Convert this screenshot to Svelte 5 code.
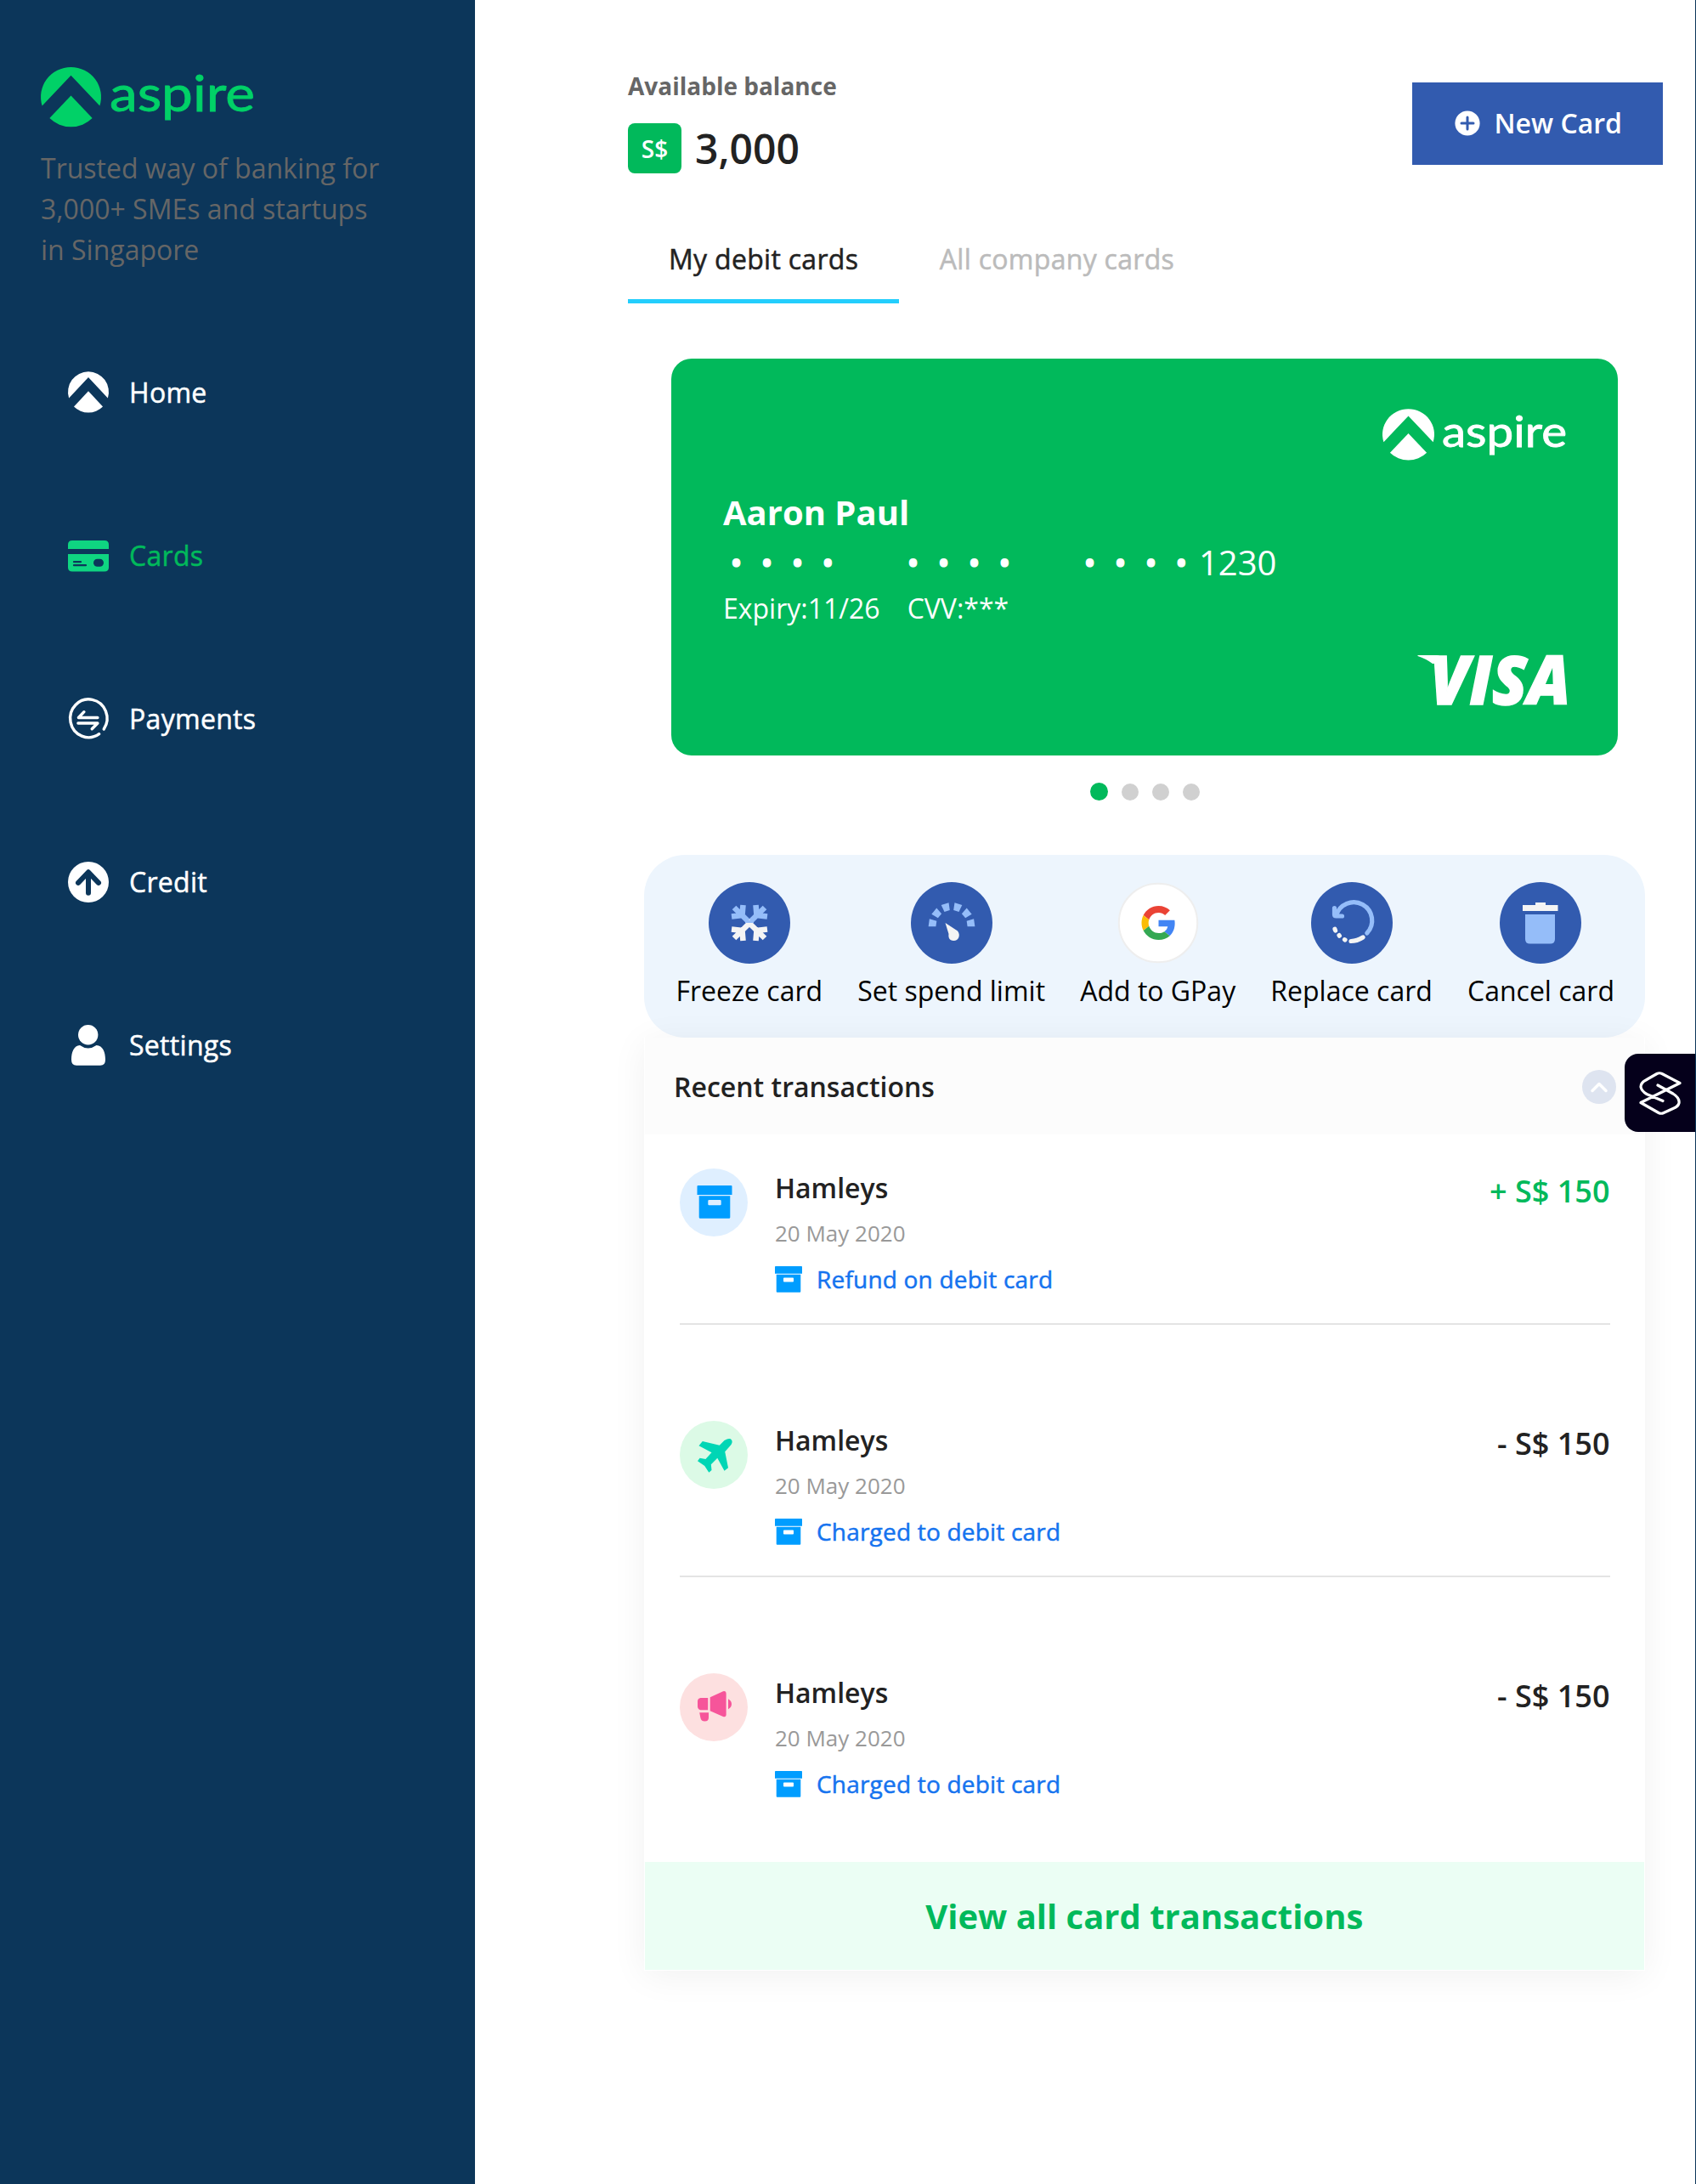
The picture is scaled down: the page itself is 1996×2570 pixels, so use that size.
<script>
  const nav = [
    { label: 'Home', icon: 'home' },
    { label: 'Cards', icon: 'cards', active: true },
    { label: 'Payments', icon: 'payments' },
    { label: 'Credit', icon: 'credit' },
    { label: 'Settings', icon: 'settings' }
  ];
  const actions = [
    { label: 'Freeze card', icon: 'freeze' },
    { label: 'Set spend limit', icon: 'limit' },
    { label: 'Add to GPay', icon: 'gpay' },
    { label: 'Replace card', icon: 'replace' },
    { label: 'Cancel card', icon: 'cancel' }
  ];
  const transactions = [
    { icon: 'box', amount: '+ S$ 150', note: 'Refund on debit card', credit: true },
    { icon: 'plane', amount: '- S$ 150', note: 'Charged to debit card' },
    { icon: 'horn', amount: '- S$ 150', note: 'Charged to debit card' }
  ];
  const ticks = [8, 40, 73, 107, 140, 172];
  const pages = [0, 1, 2, 3];
</script>

{#snippet mark()}
  <path d="M24 6 46.9 30.5A24 24 0 1 0 1.1 30.5Z" />
  <path d="M24 22.3 41 40.5A24 24 0 0 1 7 40.5Z" />
{/snippet}

{#snippet box()}
  <path d="M1 0H40Q41 0 41 1V11H0V1Q0 0 1 0Z" />
  <path fill-rule="evenodd" d="M2.2 12.3H38.8V37.5Q38.8 38.8 37.5 38.8H3.5Q2.2 38.8 2.2 37.5ZM14 17Q12.8 17 12.8 18.2V22Q12.8 23.2 14 23.2H27Q28.2 23.2 28.2 22V18.2Q28.2 17 27 17Z" />
{/snippet}

<div class="page">
  <aside>
    <svg class="brand" viewBox="0 0 256 72" fill="currentColor" role="img" aria-label="aspire">
      <svg width="71" height="70" viewBox="0 0 48 48" preserveAspectRatio="none">{@render mark()}</svg>
      <text class="word" x="81" y="50.5" font-size="58" textLength="171" lengthAdjust="spacingAndGlyphs">aspire</text>
    </svg>
    <p class="tagline">Trusted way of banking for 3,000+ SMEs and startups in Singapore</p>
    <nav>
      {#each nav as item}
        <a class:active={item.active}>
          <svg class="nav-icon" viewBox="0 0 48 48" fill="currentColor">
            {#if item.icon === 'home'}
              {@render mark()}
            {:else if item.icon === 'cards'}
              <path d="M0 16V11Q0 6 5 6H43Q48 6 48 11V16Z" />
              <path d="M0 22H48V37.5Q48 42.5 43 42.5H5Q0 42.5 0 37.5Z" />
              <path class="cut" d="M7 31.2H15M7 35.2H21" stroke-width="2.2" stroke-linecap="round" />
              <rect class="hole" x="30" y="27.7" width="12" height="9" rx="4.5" />
            {:else if item.icon === 'payments'}
              <g transform="translate(-.6 0)" fill="none" stroke="currentColor" stroke-width="3.4" stroke-linecap="round" stroke-linejoin="round">
                <path d="M42.8 36A21.7 22.4 0 1 0 37.3 41.7" />
                <path d="M35.5 22.5H13L19.5 15.7M12.5 29H35.5L28.8 35.7" />
              </g>
            {:else if item.icon === 'credit'}
              <circle cx="24" cy="24" r="24" />
              <path class="cut" d="M24 36.8V12.5M12 24.8 24 12.3 36 24.8" stroke-width="6" stroke-linecap="round" stroke-linejoin="round" />
            {:else}
              <circle cx="23.7" cy="11.8" r="11.7" />
              <path d="M14 24Q23.7 31 33.5 24C41 24.5 44 32 44 41Q44 47.8 38 47.8H10Q4 47.8 4 41C4 32 7 24.5 14 24Z" />
            {/if}
          </svg>
          <span>{item.label}</span>
        </a>
      {/each}
    </nav>
  </aside>

  <main>
    <header>
      <div>
        <h6>Available balance</h6>
        <div class="balance">
          <span class="currency">S$</span>
          <span class="total">3,000</span>
        </div>
      </div>
      <button class="new-card">
        <svg viewBox="0 0 30 30" width="30" height="30">
          <circle cx="15" cy="15" r="14.6" fill="#fff" />
          <path d="M15 8V22M8 15H22" stroke="#325baf" stroke-width="3" stroke-linecap="round" />
        </svg>
        <span>New Card</span>
      </button>
    </header>

    <div class="tabs">
      <span class="tab current">My debit cards</span>
      <span class="tab">All company cards</span>
    </div>

    <section class="card">
      <svg class="card-brand" viewBox="0 0 220 62" fill="#fff" role="img" aria-label="aspire">
        <svg width="61" height="60" viewBox="0 0 48 48" preserveAspectRatio="none">{@render mark()}</svg>
        <text class="word" x="70" y="43.8" font-size="50" textLength="147" lengthAdjust="spacingAndGlyphs">aspire</text>
      </svg>
      <div class="holder">Aaron Paul</div>
      <div class="number">
        <span class="masked">••••</span>
        <span class="masked">••••</span>
        <span class="masked last">••••</span>
        <span>1230</span>
      </div>
      <div class="meta"><span>Expiry:11/26</span><span>CVV:***</span></div>
      <svg class="visa" viewBox="0 0 178 64" fill="#fff" role="img" aria-label="VISA">
        <path d="M1.500 3H24Q30 3 31 12L19 13Q11 7 1.500 4Z" />
        <text x="15.500" y="60.5" font-size="80" textLength="166" lengthAdjust="spacingAndGlyphs">VISA</text>
      </svg>
    </section>

    <div class="pager">
      {#each pages as p}<i class:on={p === 0}></i>{/each}
    </div>

    <section class="actions">
      {#each actions as a}
        <div class="action">
          <svg viewBox="-48 -48 96 96" width="96" height="96">
            {#if a.icon === 'gpay'}
              <circle r="46.2" fill="#fff" stroke="#eee" stroke-width="2" />
              <svg x="-19.5" y="-20" width="40" height="40" viewBox="0 0 48 48">
                <path fill="#EA4335" d="M24 9.5c3.54 0 6.71 1.22 9.21 3.6l6.85-6.85C35.9 2.38 30.47 0 24 0 14.62 0 6.51 5.38 2.56 13.22l7.98 6.19C12.43 13.72 17.74 9.5 24 9.5z" />
                <path fill="#4285F4" d="M46.98 24.55c0-1.57-.15-3.09-.38-4.55H24v9.02h12.94c-.58 2.96-2.26 5.48-4.78 7.18l7.73 6c4.51-4.18 7.09-10.36 7.09-17.65z" />
                <path fill="#FBBC05" d="M10.53 28.59c-.48-1.45-.76-2.99-.76-4.59s.27-3.14.76-4.59l-7.98-6.19C.92 16.46 0 20.12 0 24c0 3.88.92 7.54 2.56 10.78l7.97-6.19z" />
                <path fill="#34A853" d="M24 48c6.48 0 11.93-2.13 15.89-5.81l-7.73-6c-2.15 1.45-4.92 2.3-8.16 2.3-6.26 0-11.57-4.22-13.47-9.91l-7.98 6.19C6.51 42.62 14.62 48 24 48z" />
              </svg>
            {:else}
              <circle r="48" fill="#325baf" />
            {/if}
            {#if a.icon === 'freeze'}
              <g fill="none" stroke-width="6.6">
                <path stroke="#95bdf9" d="M-18-18 0-.5 18-18M-7.5-21-8.5-9-21-7.5M7.5-21 8.5-9 21-7.5" />
                <path stroke="#f4f4f4" d="M-18 18 0 .5 18 18M-7.5 21-8.5 9-21 7.5M7.5 21 8.5 9 21 7.5" />
                <path stroke="#95bdf9" stroke-width="3" d="M-5-1.5H5" />
              </g>
            {:else if a.icon === 'limit'}
              <g fill="#95bdf9">
                {#each ticks as t}
                  <path transform="translate(0 3.5) rotate({-180 + t})" d="M27-4.6V4.6L18.3 3.3V-3.3Z" />
                {/each}
              </g>
              <path fill="#f4f4f4" d="M-7.5 0 7 9.5C11 14.5 8 21 2.5 21S-4 17-3.5 13Z" />
            {:else if a.icon === 'replace'}
              <g fill="none" stroke-width="5.2" stroke-linecap="round" stroke-linejoin="round">
                <path stroke="#95bdf9" d="M-18.5-8.5A21.5 21.5 0 1 1 17.8 12M-20.5-17.5V-10Q-20.5-8-18.5-8H-11.5" />
                <path stroke="#f4f4f4" d="M13 17Q6 21.5-1 21.5M-8.5 19.7-8 20M-15 14.6-14.6 15.2M-20 7.3-19.4 9" />
              </g>
            {:else if a.icon === 'cancel'}
              <path fill="#f4f4f4" d="M-21-21H-6V-24H6V-21H20.5V-14H-21Z" />
              <path fill="#95bdf9" d="M-18-10H17V19Q17 24.6 11.5 24.6H-12.5Q-18 24.6-18 19Z" />
            {/if}
          </svg>
          <span>{a.label}</span>
        </div>
      {/each}
    </section>

    <section class="transactions">
      <div class="head">
        <span>Recent transactions</span>
        <svg viewBox="0 0 40 40" width="40" height="40">
          <circle cx="20" cy="20" r="20" fill="#dee4f0" />
          <path d="M12 24.5 20 16.5 28 24.5" fill="none" stroke="#fff" stroke-width="3.5" stroke-linecap="round" stroke-linejoin="round" />
        </svg>
      </div>
      <div class="list">
        {#each transactions as t}
          <article>
            <svg class="avatar" viewBox="0 0 80 80" width="80" height="80">
              {#if t.icon === 'box'}
                <circle cx="40" cy="40" r="40" fill="#dfefff" />
                <svg x="20.5" y="20" width="41" height="39" viewBox="0 0 41 39" fill="#009dff">{@render box()}</svg>
              {:else if t.icon === 'plane'}
                <circle cx="40" cy="40" r="40" fill="#dcfae6" />
                <path fill="#00d6b5" d="M52.5 23Q59 19.5 61 22.5T59 29.7L53.2 36.3 57 55.3 52.5 58.7 44.3 43.7 36.8 51.3 37.5 58 34.3 60.7 29.3 53 21 47.3 23.6 43.7 30.4 45 37.5 37.3 22.5 29.3 26.8 24 46.8 28.7Z" />
              {:else}
                <circle cx="40" cy="40" r="40" fill="#fde0e0" />
                <g fill="#f6559a">
                  <path d="M33.2 29V43.3H24.5Q21 42.5 21 39V33Q21 29.5 24.5 29Z" />
                  <path d="M35.7 28.3 51 21.2Q54.6 20.5 54.6 24V48.5Q54.6 52 51 51L35.7 44.3Z" />
                  <path d="M57 30.3Q61 32.5 61 36.3T57 42.3ZM23.2 46.3H34V52Q34 56.5 29.5 56.5T24.3 52Z" />
                </g>
              {/if}
            </svg>
            <div class="info">
              <span class="name">Hamleys</span>
              <span class="date">20 May 2020</span>
              <span class="note">
                <svg viewBox="0 0 41 39" width="32" height="31" fill="#009dff" preserveAspectRatio="none">{@render box()}</svg>
                {t.note}
              </span>
            </div>
            <span class="amount" class:credit={t.credit}>{t.amount}</span>
          </article>
        {/each}
      </div>
      <div class="all">View all card transactions</div>
    </section>
  </main>

  <div class="widget">
    <svg viewBox="0 0 83 92" width="83" height="92" fill="none" stroke="#fff" stroke-width="3.2" stroke-linejoin="round" stroke-linecap="round">
      <path d="M39 37 57 47Q65 52 64 58Q63 62 58 64L46 69.5Q43 71 40 69.5L19 57.5 65 34.5 44 23.5Q41 22 38 23.5L25 31Q19 34 19 39Q20 44 26 47.5L45 55.5" />
    </svg>
  </div>
</div>

<style>
  :global(body) { background: #fff; }
  .page, .page :global(*) { box-sizing: border-box; }
  .page {
    position: relative;
    display: flex;
    width: 1996px;
    height: 2570px;
    overflow: hidden;
    border-right: 1px solid #0c365a;
    font-family: "Open Sans", "Noto Sans", sans-serif;
    font-size: 32px;
    line-height: 48px;
    color: #222;
  }
  svg { display: block; flex: none; overflow: visible; }

  aside {
    flex: none;
    width: 558.5px;
    padding: 80.4px 48px 0;
    background: #0c365a;
  }
  .brand { width: 256px; height: 72px; color: #01d167; }
  .word { font-family: Lato, sans-serif; font-weight: 400; stroke: currentColor; stroke-width: 0.8; }
  .card-brand { color: #fff; }
  .tagline { width: 410px; margin: 21.6px 0 0; color: #666; }
  nav { display: flex; flex-direction: column; margin-top: 48px; }
  nav a {
    display: flex;
    align-items: center;
    gap: 24px;
    height: 192px;
    padding-left: 32px;
    color: #fff;
  }
  /* Medium weight: slightly heavier and wider than regular */
  nav span, .tab, .note { letter-spacing: 0.3px; -webkit-text-stroke: 0.5px currentColor; }
  .nav-icon { width: 48px; height: 48px; }
  .active { color: #01b95b; }
  .active .nav-icon { color: #0fd581; }
  .cut { fill: none; stroke: #0c365a; }
  .hole { fill: #0c365a; }

  main { flex: 1; min-width: 0; padding: 78px 38px 0 180.5px; }
  header { display: flex; justify-content: space-between; align-items: flex-start; }
  h6 { margin: 0; font-size: 28px; line-height: 47px; font-weight: 700; color: #666; }
  .balance { display: flex; align-items: center; gap: 16px; margin-top: 20px; height: 59px; }
  .currency {
    width: 63px;
    height: 59px;
    border-radius: 8px;
    background: #01b95b;
    color: #fff;
    font-size: 28px;
    line-height: 61px;
    font-weight: 600;
    text-align: center;
  }
  .total { font-size: 48px; font-weight: 600; line-height: 59px; }
  .new-card {
    display: flex;
    align-items: center;
    gap: 17px;
    width: 295px;
    height: 97px;
    margin-top: 19px;
    padding: 0 0 1px 49.5px;
    border: 0;
    background: #325baf;
    color: #fff;
    font: 600 32px/48px "Open Sans", sans-serif;
  }
  .tabs { display: flex; height: 105px; margin-top: 48px; }
  .tab { padding: 29px 47.5px 0 48px; color: #bbb; }
  .tab.current { border-bottom: 5px solid #23cefd; color: #222; }

  .card {
    display: flex;
    flex-direction: column;
    width: 1114px;
    height: 467px;
    margin: 65.4px 0 0 51px;
    padding: 60px 59px 0 61px;
    border-radius: 24px;
    background: #01b95b;
    color: #fff;
  }
  .card-brand { align-self: flex-end; width: 220px; height: 62px; margin-right: -2px; }
  .holder { margin-top: 30.6px; font-size: 40px; line-height: 56px; font-weight: 700; }
  .number { display: flex; height: 61px; padding-left: 8px; font-size: 40px; line-height: 62px; }
  .masked { width: 144px; margin-right: 64px; letter-spacing: 20.9px; white-space: nowrap; -webkit-text-stroke: 1.2px currentColor; }
  .masked.last { margin-right: -8px; }
  .meta { display: flex; gap: 32px; }
  .visa { align-self: flex-end; width: 178px; height: 64px; margin-top: 28px; }
  .visa text { font-family: "Open Sans", sans-serif; font-weight: 800; font-style: italic; stroke: #fff; stroke-width: 1.5; }

  .pager { display: flex; align-items: center; justify-content: center; gap: 16px; width: 1216px; height: 22px; margin-top: 31.6px; }
  .pager i { width: 20px; height: 20px; border-radius: 50%; background: #d0d0d0; }
  .pager i.on { width: 21px; height: 21px; background: #01b95b; }

  .actions {
    display: flex;
    justify-content: space-between;
    width: 1178px;
    height: 215.5px;
    margin: 63px 0 0 19px;
    padding: 32px 36px 0 37.5px;
    border-radius: 48px;
    background: #edf5fd;
    color: #000;
  }
  .action { display: flex; flex-direction: column; align-items: center; gap: 8px; }

  .transactions {
    position: relative;
    width: 1177.5px;
    height: 1097.5px;
    margin-left: 19px;
    border: 1px solid #fff;
    border-top: 0;
    background: #fff;
    box-shadow: 0 6px 40px rgba(0, 0, 0, 0.06);
  }
  .head {
    display: flex;
    align-items: center;
    justify-content: space-between;
    height: 113.5px;
    padding: 1px 33px 0 34px;
    background: #fcfcfc;
    font-weight: 600;
  }
  .list { height: 856px; padding: 35.5px 40px 0 41px; }
  article {
    display: flex;
    height: 189px;
    margin-bottom: 108px;
    border-bottom: 2px solid #e4e4e4;
  }
  article:last-child { border: 0; margin: 0; }
  .avatar { margin-top: 5px; }
  .info { display: flex; flex-direction: column; flex: 1; margin-left: 32px; line-height: 54px; }
  .name { padding-top: 1px; line-height: 53px; font-weight: 600; }
  .date { font-size: 26px; color: #999; }
  .note { display: flex; align-items: center; gap: 17px; font-size: 28px; letter-spacing: 0.2px; color: #1573ef; }
  .amount { padding-top: 8px; font-size: 36px; font-weight: 600; }
  .credit { color: #01b95b; }
  .all {
    height: 127px;
    background: #ebfef4;
    color: #01b95b;
    font-size: 40px;
    font-weight: 700;
    line-height: 127px;
    text-align: center;
  }
  .widget {
    position: absolute;
    top: 1240px;
    right: 0;
    width: 83px;
    height: 92px;
    border-radius: 16px 0 0 16px;
    background: #05001b;
  }
</style>
